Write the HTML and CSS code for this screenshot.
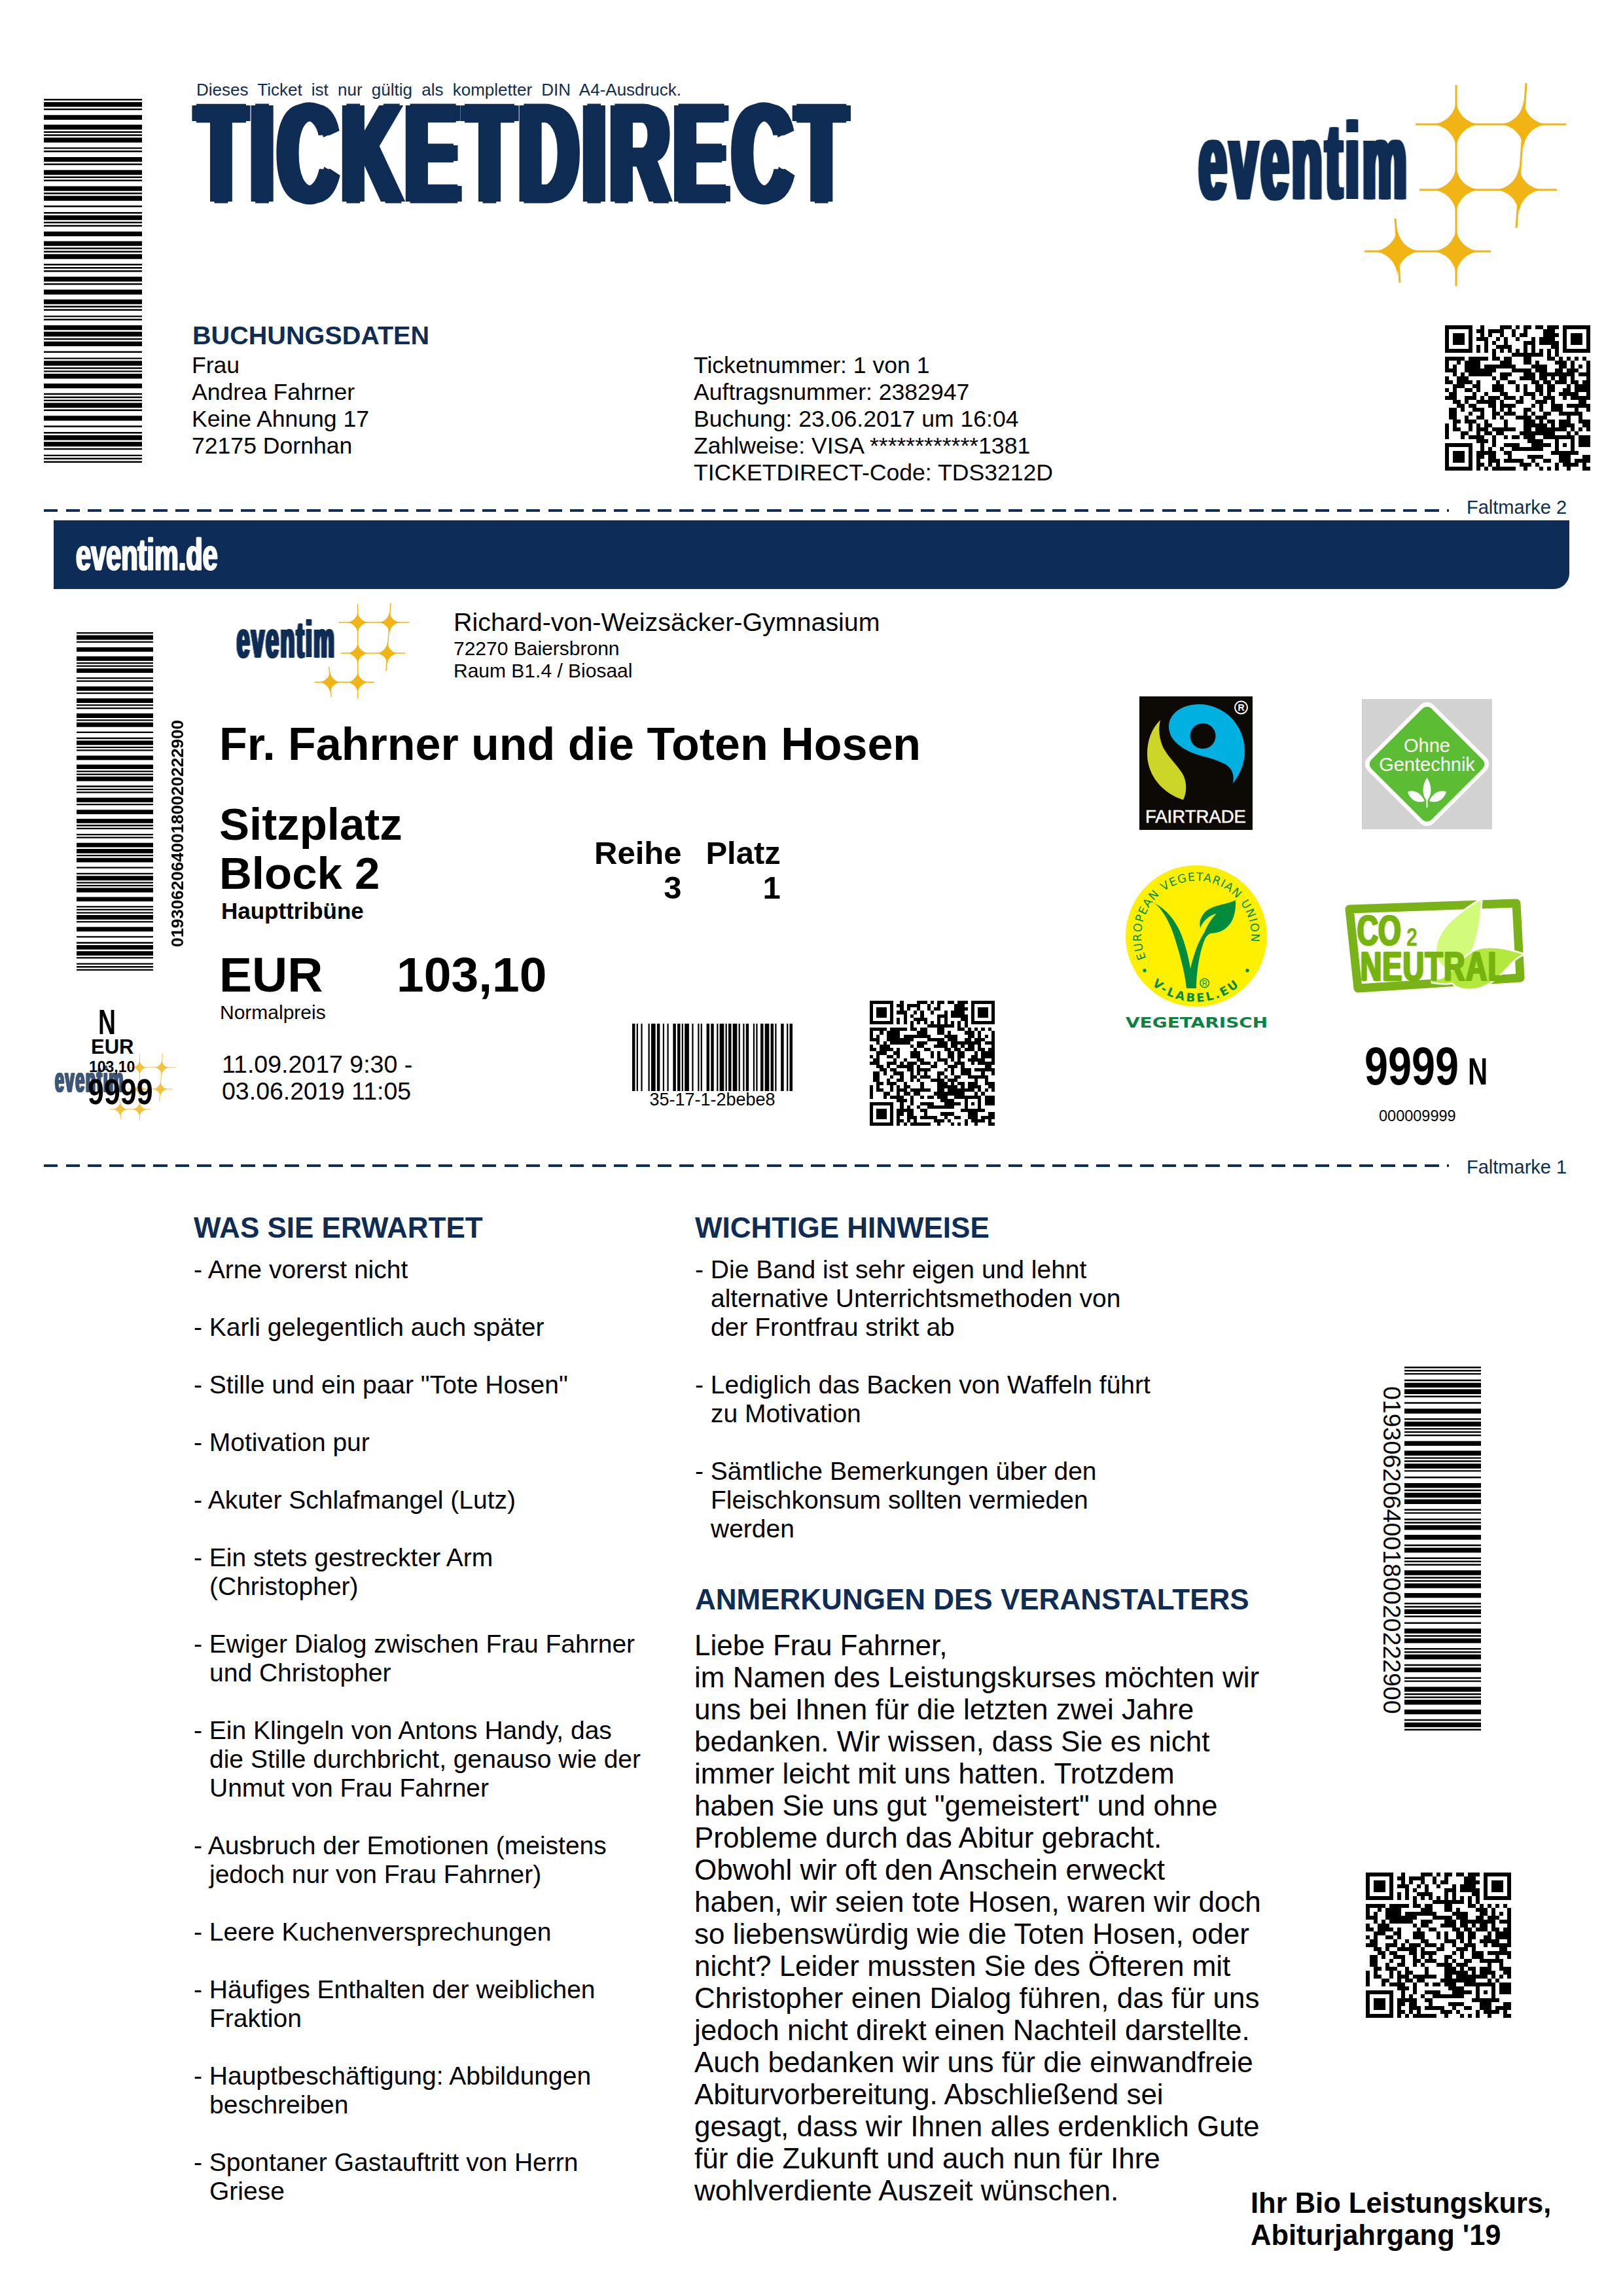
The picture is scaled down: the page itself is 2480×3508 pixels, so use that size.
FILE: index.html
```html
<!DOCTYPE html>
<html lang="de">
<head>
<meta charset="utf-8">
<title>Ticketdirect</title>
<link rel="stylesheet" href="styles.css">
</head>
<body>
<svg class="defs" aria-hidden="true">
  <defs>
    <line id="itf" class="itf-bars" x1="50" y1="0" x2="50" y2="225" stroke-dasharray="1 1 1 1 1 3 1 1 3 1 3 1 1 3 1 3 3 3 1 1 3 1 1 1 1 1 1 3 3 3 3 1 1 1 1 1 3 1 1 3 1 3 3 1 1 1 3 1 3 3 1 1 1 3 1 1 1 1 3 3 3 3 1 1 3 3 1 1 1 1 1 3 3 1 1 1 1 1 3 3 3 3 1 1 1 1 3 1 1 3 1 3 3 1 1 1 3 3 1 1 1 1 3 3 1 1 3 3 1 1 1 3 3 1 1 1 1 1 3 3 3 3 1 1 3 1 1"/>
    <g id="qr">
      <path fill="#000" fill-rule="evenodd" d="M0 0h7v7h-7zM1 1v5h5v-5zM2 2h3v3h-3zM30 0h7v7h-7zM31 1v5h5v-5zM32 2h3v3h-3zM0 30h7v7h-7zM1 31v5h5v-5zM2 32h3v3h-3zM28 28h5v5h-5zM29 29v3h3v-3zM30 30h1v1h-1z"/>
      <path class="qr-mods" transform="translate(0 .5)" d="M9 0h1M14 0h3M18 0h1M20 0h2M23 0h2M26 0h3
      M8 1h2M11 1h4M17 1h1M20 1h1M25 1h3
      M9 2h1M11 2h1M14 2h1M17 2h1M19 2h2M25 2h4
      M8 3h3M13 3h1M15 3h1M18 3h1M22 3h1M24 3h4
      M10 4h1M12 4h1M15 4h1M20 4h3M24 4h5
      M8 5h1M10 5h1M13 5h4M20 5h1M22 5h1M27 5h2
      M8 6h1M10 6h1M12 6h1M14 6h1M16 6h1M18 6h1M20 6h1M22 6h1M24 6h1M26 6h1M28 6h1
      M12 7h1M17 7h8M26 7h1M28 7h1
      M0 8h5M6 8h5M12 8h2M15 8h2M20 8h2M26 8h2M29 8h1M31 8h1M33 8h1M35 8h1
      M0 9h1M3 9h1M5 9h4M14 9h3M20 9h2M23 9h1M28 9h3M32 9h1M36 9h1
      M0 10h1M2 10h1M5 10h4M10 10h8M22 10h4M29 10h2M32 10h1M34 10h1M36 10h1
      M0 11h3M5 11h8M17 11h5M23 11h3M28 11h2M31 11h3M36 11h1
      M2 12h1M4 12h1M6 12h6M14 12h3M20 12h3M24 12h9M34 12h3
      M0 13h1M3 13h3M12 13h1M14 13h2M19 13h4M24 13h2M27 13h1M29 13h2M32 13h1M36 13h1
      M0 14h2M3 14h4M8 14h1M13 14h1M16 14h2M22 14h2M25 14h2M28 14h3M32 14h2M35 14h2
      M2 15h3M7 15h2M12 15h3M18 15h1M20 15h1M23 15h2M26 15h2M31 15h1M33 15h4
      M0 16h1M2 16h1M5 16h2M8 16h1M12 16h3M18 16h1M20 16h1M23 16h2M26 16h2M30 16h2M33 16h4
      M1 17h2M7 17h1M10 17h1M14 17h2M20 17h3M24 17h1M26 17h1M29 17h5M36 17h1
      M0 18h3M5 18h3M9 18h1M11 18h3M15 18h3M19 18h1M22 18h1M25 18h3M30 18h1M32 18h5
      M2 19h2M5 19h1M8 19h5M14 19h1M18 19h2M23 19h3M27 19h1M34 19h2
      M3 20h2M6 20h2M11 20h2M14 20h4M22 20h1M24 20h1M27 20h3M31 20h3M34 20h3
      M1 21h2M4 21h1M7 21h3M12 21h1M14 21h1M16 21h1M20 21h2M24 21h1M27 21h3M33 21h1M36 21h1
      M1 22h2M6 22h1M9 22h1M12 22h2M15 22h3M20 22h1M22 22h1M25 22h2M29 22h3M32 22h3
      M1 23h2M5 23h1M8 23h2M12 23h1M14 23h1M18 23h4M23 23h3M31 23h1M34 23h1
      M2 24h2M5 24h3M10 24h1M15 24h1M20 24h3M24 24h1M26 24h2M29 24h3M34 24h3
      M0 25h1M2 25h1M6 25h1M8 25h1M10 25h2M15 25h1M20 25h6M27 25h1M29 25h3M32 25h1M35 25h2
      M0 26h1M2 26h2M6 26h1M8 26h3M12 26h6M20 26h2M23 26h8M32 26h1M34 26h1M36 26h1
      M0 27h1M4 27h2M8 27h1M10 27h2M13 27h2M19 27h7M26 27h2M31 27h1M33 27h1
      M0 28h1M4 28h1M6 28h4M12 28h1M15 28h1M17 28h2M20 28h3M25 28h3M34 28h3
      M8 29h3M12 29h1M21 29h4M34 29h3
      M9 30h1M12 30h1M15 30h4M22 30h5M34 30h3
      M9 31h1M11 31h1M14 31h1M17 31h8
      M8 32h5M15 32h2M27 32h1M33 32h1
      M8 33h2M11 33h2M16 33h1M21 33h4M29 33h3M35 33h2
      M8 34h1M11 34h3M15 34h5M22 34h1M25 34h2M29 34h3M33 34h3M36 34h1
      M8 35h2M11 35h1M13 35h1M19 35h3M23 35h1M28 35h1M30 35h4M35 35h1
      M8 36h1M10 36h1M12 36h5M17 36h1M20 36h1M24 36h1M26 36h1M28 36h1M31 36h1M35 36h2"/>
    </g>
    <g id="stars">
      <path class="star" d="M2225 152A38 38 0 0 0 2263 190A38 38 0 0 0 2225 228A38 38 0 0 0 2187 190A38 38 0 0 0 2225 152Z"/>
      <path class="star" d="M2328 152A38 38 0 0 0 2366 190A38 38 0 0 0 2328 228A38 38 0 0 0 2290 190A38 38 0 0 0 2328 152Z"/>
      <path class="star" d="M2225 252A38 38 0 0 0 2263 290A38 38 0 0 0 2225 328A38 38 0 0 0 2187 290A38 38 0 0 0 2225 252Z"/>
      <path class="star" d="M2321 252A38 38 0 0 0 2359 290A38 38 0 0 0 2321 328A38 38 0 0 0 2283 290A38 38 0 0 0 2321 252Z"/>
      <path class="star" d="M2135 346A38 38 0 0 0 2173 384A38 38 0 0 0 2135 422A38 38 0 0 0 2097 384A38 38 0 0 0 2135 346Z"/>
      <path class="star" d="M2225 346A38 38 0 0 0 2263 384A38 38 0 0 0 2225 422A38 38 0 0 0 2187 384A38 38 0 0 0 2225 346Z"/>
      <path class="star-arm" d="M2163 190H2393M2169 290H2379M2085 384H2278M2225 130V437M2332 127L2317 348M2132 334L2139 432"/>
    </g>
  </defs>
</svg>

<main class="page">
  <section class="top">
    <svg class="bars bars-top" viewBox="0 0 100 225" preserveAspectRatio="none"><use href="#itf" transform="matrix(1 0 0 -1 0 225)"/></svg>
    <div class="top-main">
      <p class="notice">Dieses Ticket ist nur gültig als kompletter DIN A4-Ausdruck.</p>
      <h1 class="title">TICKETDIRECT</h1>
      <h2 class="head head-booking">BUCHUNGSDATEN</h2>
      <div class="booking">
        <p>Frau<br>Andrea Fahrner<br>Keine Ahnung 17<br>72175 Dornhan</p>
        <p>Ticketnummer: 1 von 1<br>Auftragsnummer: 2382947<br>Buchung: 23.06.2017 um 16:04<br>Zahlweise: VISA ************1381<br>TICKETDIRECT-Code: TDS3212D</p>
      </div>
    </div>
    <div class="top-side">
      <svg class="logo logo-lg" viewBox="1820 120 580 325"><use href="#stars"/><text class="logo-word" transform="translate(1832 303) scale(.463 1)">eventim</text></svg>
      <svg class="qr qr-top" viewBox="0 0 37 37"><use href="#qr"/></svg>
    </div>
  </section>

  <div class="fold fold-a"><span class="fold-line"></span><span class="fold-label">Faltmarke 2</span></div>

  <div class="banner"><span class="banner-word">eventim.de</span></div>

  <section class="ticket">
    <div class="stub">
      <div class="stub-code">
        <svg class="bars bars-stub" viewBox="0 0 100 225" preserveAspectRatio="none"><use href="#itf" transform="matrix(1 0 0 -1 0 225)"/></svg>
        <span class="code-up">019306206400180020222900</span>
      </div>
      <div class="stub-mini">
        <svg class="logo logo-sm" viewBox="1820 120 580 325"><use href="#stars"/><text class="logo-word" transform="translate(1832 303) scale(.463 1)">eventim</text></svg>
        <span class="mini mini-n">N</span>
        <span class="mini mini-cur">EUR</span>
        <span class="mini mini-price">103,10</span>
        <span class="mini mini-num">9999</span>
      </div>
    </div>

    <div class="event">
      <div class="venue">
        <svg class="logo logo-md" viewBox="1820 120 580 325"><use href="#stars"/><text class="logo-word" transform="translate(1832 303) scale(.463 1)">eventim</text></svg>
        <div class="venue-text">
          <p class="venue-name">Richard-von-Weizsäcker-Gymnasium</p>
          <p class="venue-addr">72270 Baiersbronn<br>Raum B1.4 / Biosaal</p>
        </div>
      </div>
      <h2 class="event-title">Fr. Fahrner und die Toten Hosen</h2>
      <div class="seat">
        <div class="seat-area">
          <p class="seat-big">Sitzplatz<br>Block 2</p>
          <p class="seat-sub">Haupttribüne</p>
        </div>
        <div class="seat-grid">
          <span>Reihe</span><span>Platz</span>
          <span class="seat-val">3</span><span class="seat-val">1</span>
        </div>
      </div>
      <div class="price-row">
        <div class="price-col">
          <p class="price"><span class="price-cur">EUR</span><span>103,10</span></p>
          <p class="price-type">Normalpreis</p>
          <p class="dates">11.09.2017 9:30 -<br>03.06.2019 11:05</p>
        </div>
        <div class="small-code">
          <svg class="bars-small" viewBox="0 0 110 100" preserveAspectRatio="none"><line class="small-bars" x1="0" y1="50" x2="110" y2="50" stroke-dasharray="2 1 1 2 1 4 1 1 3 1 2 2 1 2 1 3 2 1 2 1 1 1 3 2 1 3 1 1 1 3 2 1 2 2 1 1 3 1 1 1 2 1 3 1 1 2 1 1 2 3 1 1 1 2 2 1 3 1 2 1 1 3 2 2 1 1 2"/></svg>
          <span class="small-code-text">35-17-1-2bebe8</span>
        </div>
        <svg class="qr qr-mid" viewBox="0 0 37 37"><use href="#qr"/></svg>
      </div>
    </div>

    <div class="labels">
      <div class="labels-col">
        <svg class="fairtrade" viewBox="0 0 173 204">
          <rect width="173" height="204" fill="#0d0a05"/>
          <path fill="#00b0e0" d="M143 133C146 118 140 108 130 103C112 93 92 92 76 84C56 74 45 62 45 46C45 26 66 12 91 12C130 12 161 44 161 84C161 103 153 120 143 133Z"/>
          <circle cx="97" cy="60.5" r="19.5" fill="#0d0a05"/>
          <path fill="#cbd626" d="M32 36C18 50 12 68 12 88C12 120 35 148 67 158C72 148 73 135 68 122C60 106 42 92 35 75C30 62 29 50 32 36Z"/>
          <circle cx="155.500" cy="17" r="9.500" fill="none" stroke="#fff" stroke-width="2"/>
          <text class="ft-r" x="155.500" y="22">R</text>
          <text class="ft-word" x="9" y="193">FAIRTRADE</text>
        </svg>
        <svg class="vlabel" viewBox="0 0 216 252">
          <circle cx="108" cy="108" r="108" fill="#fff000"/>
          <path id="v-top" fill="none" d="M31.300 142A84 84 0 1 1 184.700 142"/>
          <path id="v-bottom" fill="none" d="M21 158A100 100 0 0 0 195 158"/>
          <text class="v-ring"><textPath href="#v-top" startOffset="0">EUROPEAN VEGETARIAN UNION</textPath></text>
          <text class="v-ring v-ring-b"><textPath href="#v-bottom" startOffset="50%">V-LABEL.EU</textPath></text>
          <circle cx="29" cy="160.700" r="2.700" fill="#008c3c"/><circle cx="186" cy="160.700" r="2.700" fill="#008c3c"/>
          <path fill="#008c3c" d="M42 57C55 64 68 88 75 111S90 160 93 188H108C108 165 113 130 122 111C125 107 127 105 130 104C150 104 170 90 168 53C158 60 130 60 120 73C112 83 113 90 114 96C118 85 128 76 139 74C130 82 125 92 120 103C112 115 104 135 99 158C96 140 92 125 87 111C80 90 64 67 42 57Z"/>
          <circle cx="120.700" cy="180" r="6.800" fill="none" stroke="#008c3c" stroke-width="1.500"/>
          <text class="v-reg" x="120.700" y="184">R</text>
          <text class="v-word" transform="translate(0 248) scale(1.3 1)">VEGETARISCH</text>
        </svg>
      </div>
      <div class="labels-col">
        <svg class="gen" viewBox="0 0 199 199">
          <rect width="199" height="199" fill="#d2d2d2"/>
          <rect x="28.500" y="28.500" width="142" height="142" rx="14" fill="#fff" transform="rotate(45 99.500 99.500)"/>
          <rect x="34.500" y="34.500" width="130" height="130" rx="10" fill="#5cbd34" transform="rotate(45 99.500 99.500)"/>
          <text class="gen-text" x="99.500" y="81">Ohne</text>
          <text class="gen-text" x="99.500" y="110">Gentechnik</text>
          <path fill="#fff" d="M99.500 120C92 132 91 146 99.500 156C108 146 107 132 99.500 120ZM70 142C78 138 90 142 96 156C84 160 74 154 70 142ZM129 142C121 138 109 142 103 156C115 160 125 154 129 142Z"/>
          <path stroke="#fff" stroke-width="2" d="M99.500 150V166"/>
        </svg>
        <svg class="co2" viewBox="0 0 275 144">
          <path fill="none" stroke="#7ab317" stroke-width="13" stroke-linejoin="round" d="M8 16L263 7L269 121L21 137Z"/>
          <path class="co2-leaf" fill="#d3fb7b" d="M209 2C170 25 141 50 141 80C141 95 150 105 165 110C190 100 205 70 209 2Z"/>
          <path class="co2-leaf" fill="#b3e83f" d="M273 85C250 78 225 72 205 78C185 84 175 105 150 122L133 127C150 130 158 130 165 128C175 140 200 140 215 132C245 118 250 95 273 85Z"/>
          <text class="co2-text" transform="translate(20 71) scale(.7 1)">CO</text>
          <text class="co2-sub" transform="translate(95 72) scale(.8 1)">2</text>
          <text class="co2-text" transform="translate(25 125) scale(.70 .98)" letter-spacing="2">NEUTRAL</text>
        </svg>
        <div class="count">
          <span class="count-num">9999</span>
          <span class="count-n">N</span>
        </div>
        <p class="count-id">000009999</p>
      </div>
    </div>
  </section>

  <div class="fold fold-b"><span class="fold-line"></span><span class="fold-label">Faltmarke 1</span></div>

  <section class="info">
    <div class="info-left">
      <h2 class="head">WAS SIE ERWARTET</h2>
      <ul class="list">
        <li>- Arne vorerst nicht</li>
        <li>- Karli gelegentlich auch später</li>
        <li>- Stille und ein paar "Tote Hosen"</li>
        <li>- Motivation pur</li>
        <li>- Akuter Schlafmangel (Lutz)</li>
        <li>- Ein stets gestreckter Arm<br>(Christopher)</li>
        <li>- Ewiger Dialog zwischen Frau Fahrner<br>und Christopher</li>
        <li>- Ein Klingeln von Antons Handy, das<br>die Stille durchbricht, genauso wie der<br>Unmut von Frau Fahrner</li>
        <li>- Ausbruch der Emotionen (meistens<br>jedoch nur von Frau Fahrner)</li>
        <li>- Leere Kuchenversprechungen</li>
        <li>- Häufiges Enthalten der weiblichen<br>Fraktion</li>
        <li>- Hauptbeschäftigung: Abbildungen<br>beschreiben</li>
        <li>- Spontaner Gastauftritt von Herrn<br>Griese</li>
      </ul>
    </div>
    <div class="info-mid">
      <h2 class="head">WICHTIGE HINWEISE</h2>
      <ul class="list">
        <li>- Die Band ist sehr eigen und lehnt<br>alternative Unterrichtsmethoden von<br>der Frontfrau strikt ab</li>
        <li>- Lediglich das Backen von Waffeln führt<br>zu Motivation</li>
        <li>- Sämtliche Bemerkungen über den<br>Fleischkonsum sollten vermieden<br>werden</li>
      </ul>
      <h2 class="head head-note">ANMERKUNGEN DES VERANSTALTERS</h2>
      <p class="letter">Liebe Frau Fahrner,<br>im Namen des Leistungskurses möchten wir<br>uns bei Ihnen für die letzten zwei Jahre<br>bedanken. Wir wissen, dass Sie es nicht<br>immer leicht mit uns hatten. Trotzdem<br>haben Sie uns gut "gemeistert" und ohne<br>Probleme durch das Abitur gebracht.<br>Obwohl wir oft den Anschein erweckt<br>haben, wir seien tote Hosen, waren wir doch<br>so liebenswürdig wie die Toten Hosen, oder<br>nicht? Leider mussten Sie des Öfteren mit<br>Christopher einen Dialog führen, das für uns<br>jedoch nicht direkt einen Nachteil darstellte.<br>Auch bedanken wir uns für die einwandfreie<br>Abiturvorbereitung. Abschließend sei<br>gesagt, dass wir Ihnen alles erdenklich Gute<br>für die Zukunft und auch nun für Ihre<br>wohlverdiente Auszeit wünschen.</p>
    </div>
    <div class="info-side">
      <div class="side-code">
        <span class="code-down">019306206400180020222900</span>
        <svg class="bars bars-side" viewBox="0 0 100 225" preserveAspectRatio="none"><use href="#itf"/></svg>
      </div>
      <svg class="qr qr-side" viewBox="0 0 37 37"><use href="#qr"/></svg>
      <p class="signature">Ihr Bio Leistungskurs,<br>Abiturjahrgang '19</p>
    </div>
  </section>
</main>
</body>
</html>
```

FILE: styles.css
```css
* { box-sizing: border-box; margin: 0; padding: 0; }
html, body { background: #fff; }
body { font-family: "Liberation Sans", Arial, sans-serif; color: #000; }
.defs { position: absolute; width: 0; height: 0; }
.page { width: 2480px; height: 3508px; overflow: hidden; background: #fff; }
svg { display: block; }
.itf-bars { stroke: #000; stroke-width: 100; }
.small-bars { stroke: #000; stroke-width: 100; }
.qr-mods { fill: none; stroke: #000; stroke-width: 1; }
.qr { shape-rendering: crispEdges; }
.star { fill: #f0b414; }
.star-arm { fill: none; stroke: #f0b414; stroke-width: 3; }
.logo { overflow: visible; }
.logo-word { font-family: "Liberation Sans", sans-serif; font-weight: 700; font-size: 164px; letter-spacing: 11px; fill: #0f2d54; stroke: #0f2d54; stroke-width: 3px; filter: drop-shadow(7px 0 0 #0f2d54) drop-shadow(-7px 0 0 #0f2d54); }

/* top block */
.top { display: grid; grid-template-columns: 228px 1525px 1fr; height: 758px; padding: 122px 0 0 67px; }
.bars-top { width: 150px; height: 556px; margin-top: 29px; }
.notice { font-size: 26px; line-height: 30px; color: #0f2d54; word-spacing: 7px; margin-left: 5px; white-space: nowrap; }
.title { width: max-content; font-size: 214px; letter-spacing: 13px; line-height: 160px; margin-top: 2px; color: #0f2d54; font-weight: 700; white-space: nowrap; transform: translateX(5px) scaleX(.58); transform-origin: 0 0; -webkit-text-stroke: 5px #0f2d54; text-shadow: 3px 0 #0f2d54, -3px 0 #0f2d54, 6px 0 #0f2d54, -6px 0 #0f2d54, 9px 0 #0f2d54, -9px 0 #0f2d54, 12px 0 #0f2d54, -12px 0 #0f2d54, 14px 0 #0f2d54, -14px 0 #0f2d54; }
.head { font-size: 44px; line-height: 50px; font-weight: 700; color: #0f2d54; white-space: nowrap; margin-left: 1px; }
.head-booking { font-size: 39.6px; line-height: 45px; margin: 176px 0 0 -1px; }
.booking { display: grid; grid-template-columns: 767px 1fr; margin: 3px 0 0 -2px; font-size: 35.6px; line-height: 41px; white-space: nowrap; }
.top-side { margin-top: -2px; }
.logo-lg { width: 580px; height: 325px; }
.qr-top { width: 222px; height: 222px; margin: 52px 0 0 388px; }

/* fold marks */
.fold { display: flex; align-items: center; height: 34px; padding-left: 67px; }
.fold-line { width: 2147px; height: 4px; background: repeating-linear-gradient(90deg, #0f2d54 0 21px, transparent 21px 33.5px); }
.fold-label { font-size: 29px; line-height: 34px; margin-left: 27px; color: #0f2d54; white-space: nowrap; }
.fold-a .fold-line { margin-top: 10px; }
.fold-b .fold-line { margin-bottom: 2px; }
.fold-b .fold-label { margin-top: 2px; }

/* banner */
.banner { height: 105px; margin: 3px 82px 0 82px; padding-left: 34px; background: #0e2c58; border-bottom-right-radius: 24px; }
.banner-word { display: block; width: max-content; font-size: 68px; line-height: 105px; font-weight: 700; color: #fff; white-space: nowrap; transform: scaleX(.61); transform-origin: 0 0; -webkit-text-stroke: 1px #fff; text-shadow: 2px 0 #fff, -2px 0 #fff; }

/* ticket */
.ticket { display: grid; grid-template-columns: 333px 1367px 1fr; height: 865px; }
.stub { padding-top: 66px; }
.stub-code { display: flex; align-items: flex-start; gap: 22px; margin-left: 117px; }
.bars-stub { width: 117px; height: 517px; flex: none; }
.code-up { writing-mode: vertical-rl; transform: rotate(180deg); font-size: 26px; line-height: 30px; font-weight: 700; margin-top: 134px; white-space: nowrap; }
.stub-mini { position: relative; width: 191px; margin: 125px 0 0 80px; }
.logo-sm { width: 191px; height: 107px; opacity: .8; }
.mini { position: absolute; font-weight: 700; line-height: 1; white-space: nowrap; transform-origin: 0 0; }
.mini-n { left: 70px; top: -74px; font-size: 54px; transform: scaleX(.69); }
.mini-cur { left: 59px; top: -24px; font-size: 31px; }
.mini-price { left: 56px; top: 11px; font-size: 23px; }
.mini-num { left: 54px; top: 32px; font-size: 56px; transform: scaleX(.8); }

.venue { display: flex; padding: 18px 0 0 23px; }
.logo-md { width: 273px; height: 153px; flex: none; }
.venue-text { margin: 9px 0 0 64px; white-space: nowrap; }
.venue-name { font-size: 39.4px; line-height: 46px; }
.venue-addr { font-size: 30px; line-height: 33.5px; margin-top: 1px; }
.event-title { font-size: 70px; line-height: 80px; font-weight: 700; margin: 26px 0 0 2px; white-space: nowrap; }
.seat { display: flex; margin-top: 45px; height: 189px; }
.seat-area { width: 574px; font-weight: 700; padding-left: 2px; }
.seat-big { font-size: 69px; line-height: 75px; }
.seat-sub { font-size: 35px; line-height: 40px; margin-left: 3px; }
.seat-grid { display: grid; grid-template-columns: auto auto; column-gap: 37px; align-self: flex-start; margin: 55px 0 0 1px; font-size: 49px; line-height: 53px; font-weight: 700; }
.seat-val { text-align: right; }
.price-row { display: flex; margin-top: 39px; }
.price-col { width: 633px; flex: none; }
.price { display: flex; margin: -1px 0 0 2px; font-size: 75px; line-height: 80px; font-weight: 700; }
.price-cur { width: 271px; }
.price-type { font-size: 30px; line-height: 34px; margin: 1px 0 0 3px; }
.dates { font-size: 37.5px; line-height: 41px; margin: 42px 0 0 6px; white-space: nowrap; }
.small-code { width: 245px; flex: none; margin-top: 114px; text-align: center; }
.bars-small { width: 245px; height: 103px; }
.small-code-text { display: block; font-size: 27px; line-height: 27px; white-space: nowrap; }
.qr-mid { width: 191px; height: 191px; flex: none; margin: 79px 0 0 118px; }

.labels { display: grid; grid-template-columns: 354px 1fr; }
.fairtrade { width: 173px; height: 204px; margin: 164px 0 0 41px; }
.vlabel { width: 216px; height: 252px; margin: 54px 0 0 20px; overflow: visible; }
.ft-r { font-size: 14px; font-weight: 700; fill: #fff; text-anchor: middle; }
.ft-word { font-size: 27.5px; fill: #fff; stroke: #fff; stroke-width: .5px; }
.v-ring { font-family: "DejaVu Sans", sans-serif; font-size: 17.5px; letter-spacing: 1.3px; fill: #008c3c; }
.v-ring-b { font-weight: 700; font-size: 18px; text-anchor: middle; letter-spacing: 3.2px; }
.v-reg { font-size: 11px; fill: #008c3c; text-anchor: middle; }
.v-word { font-family: "DejaVu Sans", sans-serif; font-size: 21.5px; font-weight: 700; fill: #0c8242; }
.gen { width: 199px; height: 199px; margin: 168px 0 0 27px; }
.gen-text { font-size: 29px; fill: #fff; text-anchor: middle; }
.co2 { width: 275px; height: 144px; margin-top: 106px; overflow: visible; }
.co2-leaf { stroke: #fff; stroke-width: 5px; paint-order: stroke; }
.co2-text { font-size: 64px; font-weight: 700; fill: #76b30f; stroke: #76b30f; stroke-width: 1px; filter: drop-shadow(1.500px 0 0 #76b30f) drop-shadow(-1.500px 0 0 #76b30f); }
.co2-sub { font-size: 38px; font-weight: 700; fill: #76b30f; }
.count { display: flex; align-items: baseline; margin: 67px 0 0 31px; font-weight: 700; }
.count-num { width: max-content; margin-right: -24px; font-size: 82px; line-height: 90px; white-space: nowrap; transform: scaleX(.79); transform-origin: 0 0; }
.count-n { font-size: 58px; line-height: 90px; transform: scaleX(.72); transform-origin: 0 0; }
.count-id { font-size: 23.5px; line-height: 27px; margin: 10px 0 0 53px; }

/* lower block */
.info { display: grid; grid-template-columns: 766px 849px 1fr; padding: 52px 0 0 295px; }
.list { list-style: none; margin: 17px 0 0 1px; font-size: 39px; line-height: 44px; white-space: nowrap; }
.list li { padding-left: 24px; text-indent: -24px; margin-bottom: 44px; }
.list li:last-child { margin-bottom: 0; }
.head-note { margin-top: 61px; }
.letter { margin: 20px 0 0 0; font-size: 44px; line-height: 49px; white-space: nowrap; }
.side-code { display: flex; align-items: flex-start; margin: 237px 0 0 203px; gap: 5px; }
.code-down { writing-mode: vertical-rl; font-size: 37.5px; line-height: 28px; margin-top: 30px; white-space: nowrap; }
.bars-side { width: 117px; height: 556px; flex: none; }
.qr-side { width: 222px; height: 222px; margin: 217px 0 0 177px; }
.signature { margin: 259px 0 0 1px; font-size: 43.5px; line-height: 49px; font-weight: 700; white-space: nowrap; }
```
